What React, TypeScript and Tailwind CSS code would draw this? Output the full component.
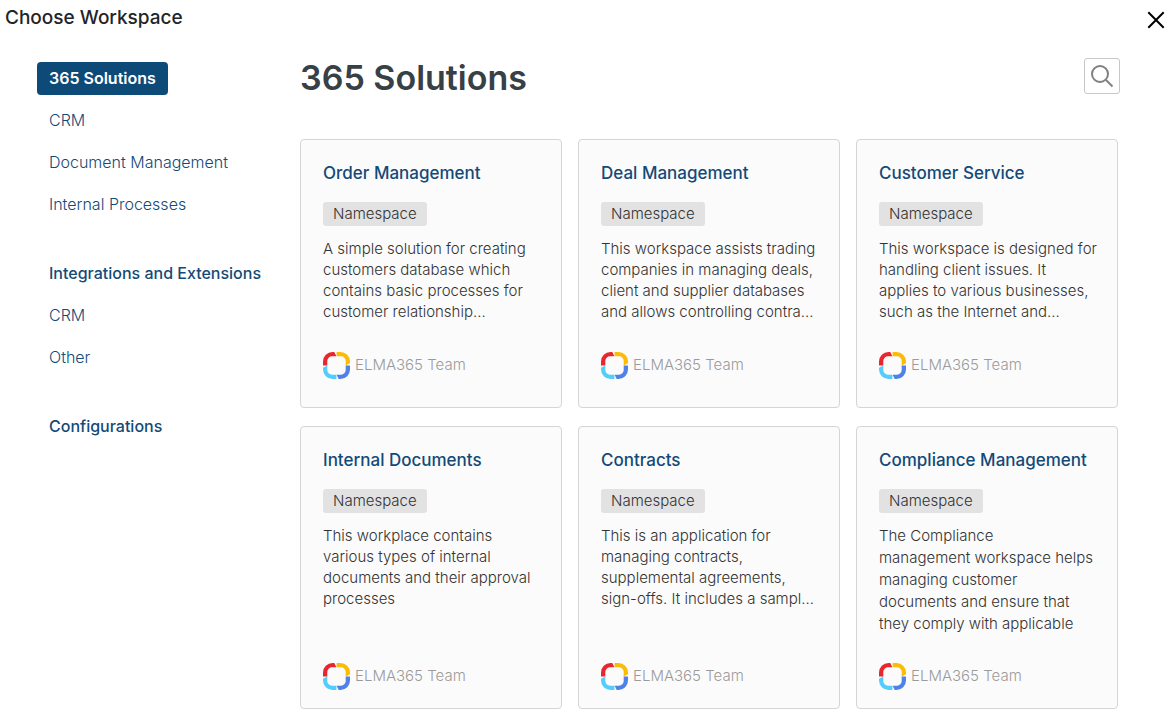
import { useState } from 'react'
import clsx from 'clsx'

interface Workspace {
  title: string
  description: string
  full?: boolean
}

const navGroups = [
  { title: '365 Solutions', items: ['CRM', 'Document Management', 'Internal Processes'] },
  { title: 'Integrations and Extensions', items: ['CRM', 'Other'] },
  { title: 'Configurations', items: [] },
]

const solutions: Workspace[] = [
  {
    title: 'Order Management',
    description:
      'A simple solution for creating customers database which contains basic processes for customer relationship...',
  },
  {
    title: 'Deal Management',
    description:
      'This workspace assists trading companies in managing deals, client and supplier databases and allows controlling contra...',
  },
  {
    title: 'Customer Service',
    description:
      'This workspace is designed for handling client issues. It\napplies to various businesses, such as the Internet and...',
  },
]

const documents: Workspace[] = [
  {
    title: 'Internal Documents',
    description: 'This workplace contains various types of internal documents and their approval processes',
  },
  {
    title: 'Contracts',
    description:
      'This is an application for managing contracts, supplemental agreements, sign-offs. It includes a sampl...',
  },
  {
    title: 'Compliance Management',
    description:
      'The Compliance\nmanagement workspace helps managing customer\ndocuments and ensure that they comply with applicable',
    full: true,
  },
]

const ElmaLogo = () => (
  <svg viewBox="0 0 27 27" className="size-[27px] shrink-0" aria-hidden="true">
    <path d="M0 13.4V9.5A9.5 9.5 0 0 1 9.5 0h1.8L13.4 4.3H9A4.7 4.7 0 0 0 4.3 9v4.4z" fill="#e8262f" />
    <path d="M13.6 0h3.9A9.5 9.5 0 0 1 27 9.5v1.8L22.7 13.4V9A4.7 4.7 0 0 0 18 4.3h-4.4z" fill="#fbbc05" />
    <path d="M27 13.6v3.9a9.5 9.5 0 0 1-9.5 9.5h-1.8L13.6 22.7H18a4.7 4.7 0 0 0 4.7-4.7v-4.4z" fill="#4f82e8" />
    <path d="M13.4 27H9.5A9.5 9.5 0 0 1 0 17.5v-1.8L4.3 13.6V18A4.7 4.7 0 0 0 9 22.7h4.4z" fill="#55cdfc" />
  </svg>
)

const WorkspaceCard = ({ workspace, compact }: { workspace: Workspace; compact?: boolean }) => (
  <article
    className={clsx(
      'flex flex-col items-start rounded border border-[#d5d5d5] bg-[#fbfbfb] pt-[21px] pr-4 pl-[22px]',
      compact ? 'pb-[18px]' : 'pb-7',
    )}
  >
    <h2 className="text-[17px] leading-6 font-medium text-[#134a78]">{workspace.title}</h2>
    <span className="mt-[17px] rounded-[3px] bg-[#e2e2e2] px-[10px] text-[15px] leading-6 font-light text-[#333]">
      Namespace
    </span>
    <p
      className={clsx(
        'mt-3 text-[15px] font-light whitespace-pre-line text-[#333]',
        workspace.full ? 'leading-[22px]' : 'leading-[21px]',
      )}
    >
      {workspace.description}
    </p>
    <div
      className={clsx(
        'mt-auto flex items-center gap-[5px] text-[15px] font-light text-[#9b9b9b]',
        compact ? 'pt-7' : 'pt-[30px]',
      )}
    >
      <ElmaLogo />
      ELMA365 Team
    </div>
  </article>
)

export default function App() {
  const [active, setActive] = useState('365 Solutions')

  return (
    <div className="min-h-screen bg-white font-['Inter',sans-serif]">
      <header className="flex items-start justify-between pt-[6px] pr-2 pl-[5px]">
        <h1 className="text-[19px] leading-6 font-medium text-[#212529]">Choose Workspace</h1>
        <button type="button" aria-label="Close" className="mt-[5px] size-[18px] text-black">
          <svg viewBox="0 0 18 18" className="size-[18px]" fill="none" stroke="currentColor" strokeWidth="2">
            <path d="M1.3 1.3l15.4 15.4M16.7 1.3L1.3 16.7" />
          </svg>
        </button>
      </header>

      <div className="flex pt-7 pr-[55px] pl-[37px]">
        <nav className="flex w-[263px] shrink-0 flex-col gap-9 pt-1">
          {navGroups.map((group) => (
            <div key={group.title} className="flex flex-col items-start gap-[9px]">
              <button
                type="button"
                onClick={() => setActive(group.title)}
                className={clsx(
                  'rounded px-3 text-base leading-[33px] whitespace-nowrap',
                  active === group.title ? 'bg-[#0e4a78] font-semibold text-white' : 'font-medium text-[#134a78]',
                )}
              >
                {group.title}
              </button>
              {group.items.map((item) => (
                <a key={item} href="#" className="px-3 text-base leading-[33px] font-light text-[#134a78]">
                  {item}
                </a>
              ))}
            </div>
          ))}
        </nav>

        <main className="min-w-0 flex-1">
          <div className="-mr-[2px] flex items-center justify-between">
            <h2 className="pt-1 text-[34px] leading-8 font-semibold text-[#373f47]">365 Solutions</h2>
            <button
              type="button"
              aria-label="Search"
              className="flex size-9 items-center justify-center rounded-[3px] border border-[#c8c8c8] text-[#808080]"
            >
              <svg viewBox="0 0 24 24" className="size-6" fill="none" stroke="currentColor" strokeWidth="2">
                <circle cx="10" cy="10" r="8" />
                <path d="M16 16l6.5 6.5" />
              </svg>
            </button>
          </div>

          <div className="mt-[45px] grid grid-cols-3 gap-4">
            {solutions.map((workspace) => (
              <WorkspaceCard key={workspace.title} workspace={workspace} />
            ))}
          </div>
          <div className="mt-[18px] grid grid-cols-3 gap-4 pb-2">
            {documents.map((workspace) => (
              <WorkspaceCard key={workspace.title} workspace={workspace} compact />
            ))}
          </div>
        </main>
      </div>
    </div>
  )
}
